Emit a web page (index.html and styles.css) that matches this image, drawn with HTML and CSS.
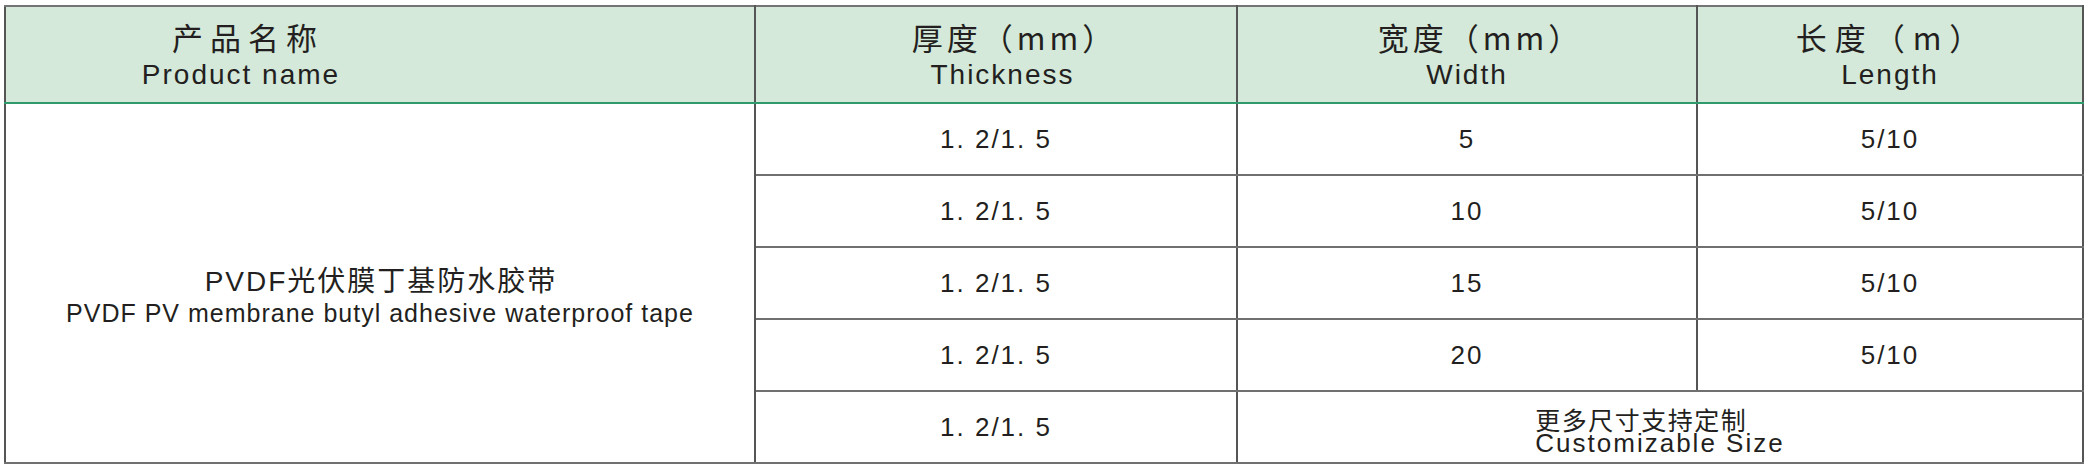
FILE: index.html
```html
<!DOCTYPE html>
<html lang="zh-CN">
<head>
<meta charset="utf-8">
<title>PVDF光伏膜丁基防水胶带</title>
<link rel="stylesheet" href="styles.css">
</head>
<body>
<div class="wrap">
<table class="spec">
  <colgroup>
    <col class="c-name">
    <col class="c-thick">
    <col class="c-width">
    <col class="c-len">
  </colgroup>
  <thead>
    <tr class="head">
      <th class="h-name"><span class="zh zh-name">产品名称</span><span class="en">Product name</span></th>
      <th><span class="zh zh-thick">厚度（mm）</span><span class="en en-thick">Thickness</span></th>
      <th><span class="zh zh-width">宽度（mm）</span><span class="en">Width</span></th>
      <th><span class="zh zh-len">长度（m）</span><span class="en">Length</span></th>
    </tr>
  </thead>
  <tbody>
    <tr>
      <td rowspan="5" class="prod"><span class="zh">PVDF光伏膜丁基防水胶带</span><span class="en">PVDF PV membrane butyl adhesive waterproof tape</span></td>
      <td class="num">1. 2/1. 5</td>
      <td class="num">5</td>
      <td class="num">5/10</td>
    </tr>
    <tr>
      <td class="num">1. 2/1. 5</td>
      <td class="num">10</td>
      <td class="num">5/10</td>
    </tr>
    <tr>
      <td class="num">1. 2/1. 5</td>
      <td class="num">15</td>
      <td class="num">5/10</td>
    </tr>
    <tr>
      <td class="num">1. 2/1. 5</td>
      <td class="num">20</td>
      <td class="num">5/10</td>
    </tr>
    <tr>
      <td class="num">1. 2/1. 5</td>
      <td colspan="2" class="custom"><div class="cbox"><span class="zh">更多尺寸支持定制</span><span class="en">Customizable Size</span></div></td>
    </tr>
  </tbody>
</table>
</div>
</body>
</html>
```
FILE: styles.css
```css
html, body {
  margin: 0;
  padding: 0;
  background: #ffffff;
}
body {
  font-family: "Liberation Sans", "Noto Sans CJK SC", sans-serif;
  color: #231f20;
}
.wrap {
  padding: 5px 7px 0 4px;
}
.spec {
  width: 2078px;
  border-collapse: collapse;
  table-layout: fixed;
  border: 2px solid #747474;
}
.c-name { width: 750px; }
.c-thick { width: 482px; }
.c-width { width: 460px; }
.c-len { width: 386px; }

.spec th, .spec td {
  border: 2px solid #555555;
  text-align: center;
  vertical-align: middle;
  padding: 0;
}
.spec td { border-top-color: #707070; border-bottom-color: #707070; }

.head th {
  background: #d4e9d9;
  height: 92px;
  font-weight: normal;
  border-top-color: #747474;
  border-bottom: 2px solid #2f9a6c;
  padding-top: 3px;
}
.head th.h-name {
  padding-right: 278px;
}
.head th .zh {
  display: block;
  font-family: "Noto Sans CJK SC", sans-serif;
  font-size: 31px;
  line-height: 38px;
  letter-spacing: 4px;
}
.head th .zh-name {
  letter-spacing: 7px;
  padding-left: 14px;
}
.head th .zh-thick {
  padding-left: 37px;
}
.head th .zh-width {
  padding-left: 27px;
}
.head th .zh-len {
  letter-spacing: 8px;
  padding-left: 4px;
}
.head th .en {
  display: block;
  font-size: 28px;
  line-height: 38px;
  letter-spacing: 2px;
}
.head th .en-thick {
  padding-left: 13px;
}

.spec tbody tr { height: 72px; }

.num {
  font-size: 26px;
  letter-spacing: 2px;
}

.prod .zh {
  display: block;
  font-size: 28px;
  line-height: 32px;
  letter-spacing: 2px;
  padding-left: 2px;
  padding-top: 28px;
}
.prod .en {
  display: block;
  font-size: 25px;
  line-height: 30px;
  letter-spacing: 1px;
}

.custom {
  padding-top: 9px !important;
}
.cbox {
  display: inline-block;
  text-align: left;
}
.cbox .zh {
  display: block;
  font-family: "Noto Sans CJK SC", sans-serif;
  font-size: 25px;
  line-height: 24px;
  letter-spacing: 1.5px;
}
.cbox .en {
  display: block;
  font-size: 26px;
  line-height: 25px;
  letter-spacing: 2px;
}
```
